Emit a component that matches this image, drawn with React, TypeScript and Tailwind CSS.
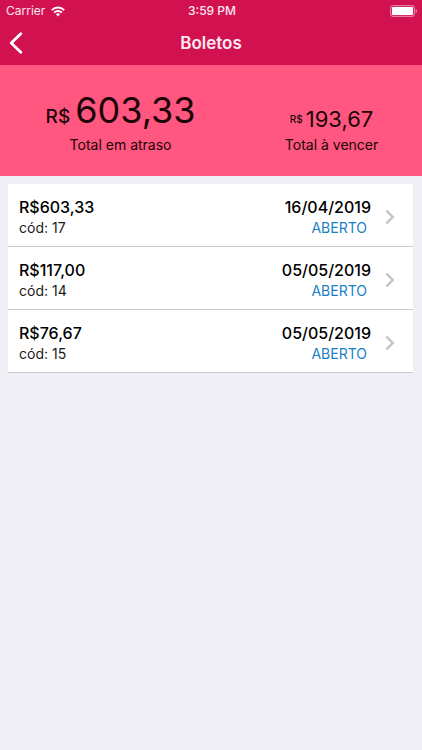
const BOLETOS = [
  { cod: 17, valor: "603,33", data: "16/04/2019", status: "ABERTO" },
  { cod: 14, valor: "117,00", data: "05/05/2019", status: "ABERTO" },
  { cod: 15, valor: "76,67", data: "05/05/2019", status: "ABERTO" },
];

function StatusBar() {
  return (
    <div className="grid grid-cols-3 items-center h-[22px] pl-[6px] pr-[4px] text-[12px] leading-[22px]">
      <div className="flex items-center gap-[6px] text-white/90">
        <span>Carrier</span>
        <svg width="14" height="11" viewBox="0 0 14 11" fill="none" stroke="#fff" strokeWidth="1.9">
          <path d="M0.8 4.1a8.8 8.8 0 0 1 12.4 0" />
          <path d="M3.1 6.6a5.5 5.5 0 0 1 7.8 0" />
          <path d="M7 10.6 4.8 8.3a3.2 3.2 0 0 1 4.4 0z" fill="#fff" stroke="none" />
        </svg>
      </div>
      <span className="text-center font-medium text-white/90">3:59 PM</span>
      <svg className="justify-self-end" width="28" height="12" viewBox="0 0 28 12" fill="none">
        <rect x="0.6" y="0.6" width="23.8" height="10.8" rx="2.6" stroke="#fff" strokeOpacity="0.45" strokeWidth="1.2" />
        <rect x="2" y="2" width="21" height="8" rx="1" fill="#fff" />
        <path d="M25.6 4v4c1-.3 1.5-1.1 1.5-2s-.5-1.7-1.5-2z" fill="#fff" fillOpacity="0.45" />
      </svg>
    </div>
  );
}

export default function App() {
  return (
    <div className="min-h-screen bg-[#efeef5] text-black font-['Inter','Liberation_Sans',sans-serif]">
      <header className="bg-[#d11150] pb-[1px] text-white">
        <StatusBar />

        {/* Navegação */}
        <nav className="grid grid-cols-[40px_1fr_40px] items-center h-[42px]">
          <button type="button" aria-label="Voltar" className="flex items-center h-full pl-[8px]">
            <svg width="16" height="22" viewBox="0 0 16 22" fill="none" stroke="#fff" strokeWidth="2.8" strokeLinecap="round" strokeLinejoin="round">
              <path d="M12.8 1.8 3.2 11l9.6 9.2" />
            </svg>
          </button>
          <h1 className="text-center text-[17px] leading-[22px] font-semibold text-[#fdeaf1]">Boletos</h1>
        </nav>
      </header>

      {/* Totais */}
      <section className="flex items-end bg-[#ff577f] pt-[28px] pb-[21px] text-[#1c0409]">
        <div className="flex-4 text-center">
          <p className="flex items-baseline justify-center gap-[5px] leading-[34px]">
            <span className="text-[19px] font-medium">R$</span>
            <span className="text-[36px]">603,33</span>
          </p>
          <p className="text-[14px] leading-[21px]">Total em atraso</p>
        </div>
        <div className="flex-3 text-center">
          <p className="flex items-center justify-center gap-[3px] leading-[30px]">
            <span className="text-[10px] font-medium">R$</span>
            <span className="text-[22px]">193,67</span>
          </p>
          <p className="text-[14px] leading-[21px]">Total à vencer</p>
        </div>
      </section>

      {/* Lista de boletos */}
      <ul className="ml-[8px] mr-[9px] mt-[8px]">
        {BOLETOS.map((b) => (
          <li key={b.cod} className="bg-white border-b border-[#cbcacf]">
            <a href={`#boleto-${b.cod}`} className="flex items-center pt-[12px] pb-[9px] pl-[11px] pr-[18px]">
              <div className="flex-1">
                <p className="text-[16px] leading-[22px] font-medium">R${b.valor}</p>
                <p className="text-[14px] leading-[19px] text-[#1a1a1a]">cód: {b.cod}</p>
              </div>
              <div className="text-right">
                <p className="text-[16px] leading-[22px] font-medium">{b.data}</p>
                <p className="pr-[4px] text-[14px] leading-[19px] text-[#1880c4]">{b.status}</p>
              </div>
              <svg className="ml-[14px]" width="10" height="16" viewBox="0 0 10 16" fill="none" stroke="#c0c5cc" strokeWidth="2.4">
                <path d="M1.4 1.6 7.8 8l-6.4 6.4" />
              </svg>
            </a>
          </li>
        ))}
      </ul>
    </div>
  );
}
